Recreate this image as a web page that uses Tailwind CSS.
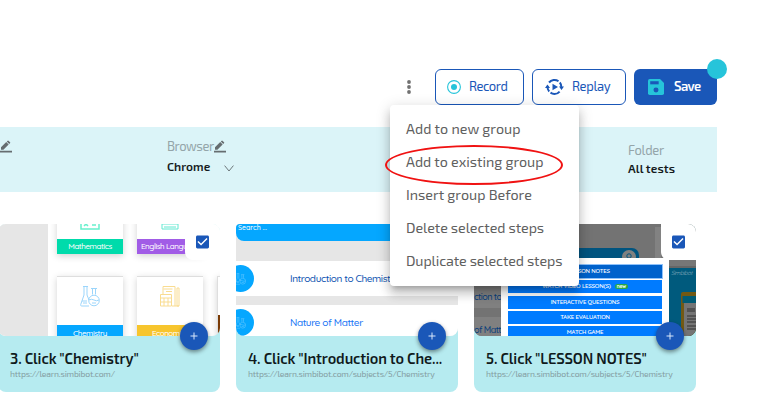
<!DOCTYPE html>
<html lang="en">
<head>
<meta charset="utf-8">
<title>Test steps</title>
<script src="https://cdn.jsdelivr.net/npm/@tailwindcss/browser@4"></script>
</head>
<body class="bg-white">
<svg class="hidden">
  <symbol id="pencil" viewBox="0 0 24 24"><path fill="#666d70" d="M0 20.500h24V24H0zM2 13.700V18.500h4.800L17.300 8 12.500 3.200zM20.200 5.100a1 1 0 0 0 0-1.400L16.800.3a1 1 0 0 0-1.400 0L13.600 2.100 18.400 6.900z"/></symbol>
  <symbol id="check" viewBox="3 3 18 18"><path fill="#1a57b8" d="M19 3H5c-1.110 0-2 .9-2 2v14c0 1.100.89 2 2 2h14c1.110 0 2-.9 2-2V5c0-1.100-.89-2-2-2zm-9 14l-5-5 1.410-1.410L10 14.170l7.590-7.590L19 8l-9 9z"/></symbol>
  <symbol id="flasks" viewBox="0 0 20 21"><g fill="none" stroke="currentColor" stroke-width="1"><path d="M3 .5h5M4 1v8L.7 18.500q-.3 1.500 1 1.500H9M7 1v8l2 5M2 15h5M11 2.500h6M12.500 3v5.500M15.500 3v5.500"/><circle cx="14" cy="14.500" r="5.300"/><path d="M9 14q2.500-1.500 5 0t5 0M3 17h4M12 17h4"/></g></symbol>
  <symbol id="ledger" viewBox="0 0 20 21"><g fill="none" stroke="currentColor" stroke-width="1"><path d="M3 8V.5h12V20M3.500 3h9M6 5.500h6M17 2v18h2V2zM.5 8.500h11V20H.5zM.5 12h11M4 12v8M8 12v8M.5 16h11M12 20h7"/></g></symbol>
</svg>

<div class="relative w-[761px] h-[401px] overflow-hidden font-['Exo_2','Exo','Open_Sans',sans-serif]">
  <header class="flex items-end justify-end h-[105px] pr-11 gap-2 text-[13px] text-[#1a57b8]">
    <svg class="w-1 h-[14px] mr-4 mb-[11px]" viewBox="0 0 4 14" fill="#717171"><circle cx="2" cy="2" r="1.900"/><circle cx="2" cy="7" r="1.900"/><circle cx="2" cy="12" r="1.900"/></svg>
    <button class="flex items-center w-[89px] h-9 rounded-md border border-[#1a57b8] pl-[11px]">
      <svg class="w-[14px] h-[14px] shrink-0" viewBox="0 0 14 14"><circle cx="7" cy="7" r="6.400" fill="none" stroke="#26c4da" stroke-width="1.100"/><circle cx="7" cy="7" r="3" fill="#26c4da"/></svg>
      <span class="ml-2 -mt-[3px] tracking-[-0.45px] leading-5">Record</span>
    </button>
    <button class="flex items-center w-[94px] h-9 rounded-md border border-[#1a57b8] pl-3">
      <svg class="w-[19px] h-[18px] shrink-0" viewBox="0 0 19 18"><g fill="none" stroke="#1a57b8" stroke-width="2"><path d="M4 4.500A7 7 0 0 1 13.500 3.200M14.800 4.500a7 7 0 0 1 1.600 5M14.600 13.600A7 7 0 0 1 5.500 14.700M4.200 13.500A7 7 0 0 1 2.600 8"/></g><path fill="#1a57b8" d="M7.500 5.800l5.500 3.200-5.500 3.200zM0 10l2.500-3.500L5 10zM14 8.500h5l-2.500 3.500z"/></svg>
      <span class="ml-2 -mt-[3px] tracking-[-0.35px] leading-5">Replay</span>
    </button>
    <div class="relative">
      <button class="flex items-center w-[83px] h-9 rounded-md bg-[#1a57b8] pl-[14px] text-white font-semibold">
        <svg class="w-4 h-4 shrink-0" viewBox="0 0 18 18"><path fill="#26c4da" d="M2 0h11.500L18 4.500V16a2 2 0 0 1-2 2H2a2 2 0 0 1-2-2V2a2 2 0 0 1 2-2z"/><path fill="#1a57b8" d="M2.500 2.500h9.500v3.500H2.500z"/><circle cx="9" cy="12.500" r="2.800" fill="#1a57b8"/></svg>
        <span class="ml-[10px] -mt-[3px] tracking-[-0.6px] leading-5">Save</span>
      </button>
      <span class="absolute -top-[10px] -right-[10px] w-5 h-5 rounded-full bg-[#26c4da]"></span>
    </div>
  </header>

  <section class="mt-[22px] w-[717px] h-[65px] bg-[#dbf4f8] flex text-[13px] leading-4">
    <svg class="w-3 h-[13px] mt-[13px] shrink-0"><use href="#pencil"/></svg>
    <div class="ml-[155px] w-[461px] pt-[11px]">
      <div class="flex"><span class="text-[#94a5a9] tracking-[-0.45px] w-[47px]">Browser</span><svg class="w-3 h-[13px] mt-[2px]"><use href="#pencil"/></svg></div>
      <div class="flex items-center mt-1 text-[#151b1d]"><span class="font-semibold text-[12px] tracking-[0.05px] w-[57px]">Chrome</span><svg class="w-[10px] h-[7px] mt-[5px]" viewBox="0 0 10 7" fill="none" stroke="#6c777a"><path d="M.6.6L5 6 9.400.6"/></svg></div>
    </div>
    <div class="pt-[15px]">
      <div class="text-[#94a5a9] tracking-[-0.3px]">Folder</div>
      <div class="mt-[2px] text-[12px] font-semibold tracking-[0.12px] text-[#151b1d]">All tests</div>
    </div>
  </section>

  <main class="flex gap-4 mt-8 -ml-[2px]">
    <article class="relative w-[222px] h-[168px] shrink-0 rounded-[8px] bg-[#b6ebf0]">
      <div class="h-28 rounded-lg overflow-hidden bg-white flex font-['Quicksand','Lato',sans-serif]">
        <div class="w-[50px] shrink-0 bg-[#e6e6e6]"></div>
        <div class="ml-[9px] -mt-[34px] shrink-0 grid grid-cols-[66px_66px_66px] auto-rows-[64px] gap-x-[14px] gap-y-[22px] text-[8px] tracking-[-0.45px] leading-[15px] font-medium text-white text-center">
          <div class="flex flex-col justify-end border-t border-[#e6e6e6] shadow-[0_2px_7px_rgba(0,0,0,.18)]"><svg class="w-5 h-5 mx-auto mb-[9px]" viewBox="0 0 20 20" fill="none" stroke="#67f0cd" stroke-width="1.500"><path d="M1 1h18v18H1zM4 12l4 4M8 12l-4 4M12 15h4"/></svg><div class="bg-[#00dbab] h-[15px]">Mathematics</div></div>
          <div class="flex flex-col justify-end border-t border-[#e6e6e6] shadow-[0_2px_7px_rgba(0,0,0,.18)]"><svg class="w-[18px] h-5 mx-auto mb-[9px]" viewBox="0 0 18 20" fill="none" stroke="#60e8d1"><path d="M1 1h16v13H1zM1 14v5h16v-5M3 17h12"/></svg><div class="bg-[#a15ce6] h-[15px] whitespace-nowrap pl-1 text-left">English Langu</div></div>
          <div></div>
          <div class="flex flex-col justify-end border-t border-[#dedede] shadow-[0_2px_7px_rgba(0,0,0,.18)]"><svg class="w-5 h-[21px] mx-auto mb-[18px] text-[#9bd5fb]"><use href="#flasks"/></svg><div class="bg-[#05a7ff] h-[15px] pt-px">Chemistry</div></div>
          <div class="flex flex-col justify-end border-t border-[#dedede] shadow-[0_2px_7px_rgba(0,0,0,.18)]"><svg class="w-5 h-[21px] mx-auto mb-[18px] text-[#f9dc91]"><use href="#ledger"/></svg><div class="bg-[#f7c52d] h-[15px] pt-px">Economics</div></div>
          <div class="border-l border-t border-[#dedede] pt-[38px] shadow-[0_2px_7px_rgba(0,0,0,.18)]"><div class="h-[26px] bg-[#7a3b06]"></div></div>
        </div>
      </div>
      <div class="pl-3 pt-3 text-[14.7px] leading-5 font-semibold tracking-[-0.1px] text-[#101a1c]">3. Click "Chemistry"</div>
      <div class="pl-3 text-[8.6px] leading-3 tracking-[-0.2px] text-[#849da2]">https://learn.simbibot.com/</div>
      <div class="absolute top-0 right-0 w-[35px] h-9 bg-white rounded-bl-lg rounded-tr-lg flex items-center justify-center"><svg class="w-[13px] h-[14px]"><use href="#check"/></svg></div>
      <div class="absolute top-[98px] right-3 w-7 h-7 rounded-full bg-[#1a57b8] shadow-[0_2px_4px_rgba(0,0,0,.45)] flex items-center justify-center"><svg class="w-2 h-2" viewBox="0 0 8 8" stroke="#d9e8fb"><path d="M4 .5v7M.5 4h7"/></svg></div>
    </article>

    <article class="relative w-[222px] h-[168px] shrink-0 rounded-[8px] bg-[#b6ebf0]">
      <div class="h-28 rounded-b-lg rounded-tl-sm overflow-hidden bg-[#e6e6e6] font-['Quicksand','Lato',sans-serif] text-[10px] font-medium">
        <div class="h-[17px] bg-[#05a7ff] rounded-bl-lg text-white text-[7px] leading-[8px] pl-[2px]">Search ...</div>
        <div class="mt-5 h-[35px] bg-white flex items-center"><div class="-ml-[9px] w-[27px] h-[27px] shrink-0 rounded-full bg-[#05a7ff] flex items-center justify-center"><svg class="w-[11px] h-3 text-[#67c9ff]"><use href="#flasks"/></svg></div><span class="ml-9 text-[#0b52b0] whitespace-nowrap tracking-[-0.42px]">Introduction to Chemistry</span></div>
        <div class="mt-[9px] h-[35px] bg-white flex items-center"><div class="-ml-[9px] w-[27px] h-[27px] shrink-0 rounded-full bg-[#05a7ff] flex items-center justify-center"><svg class="w-[11px] h-3 text-[#67c9ff]"><use href="#flasks"/></svg></div><span class="ml-9 text-[#1472f5] whitespace-nowrap tracking-[-0.4px]">Nature of Matter</span></div>
      </div>
      <div class="pl-3 pt-3 text-[14.7px] leading-5 font-semibold tracking-[-0.1px] text-[#101a1c] whitespace-nowrap">4. Click "Introduction to Che...</div>
      <div class="pl-3 text-[8.6px] leading-3 tracking-[-0.2px] text-[#849da2] whitespace-nowrap">https://learn.simbibot.com/subjects/5/Chemistry</div>
      <div class="absolute top-[98px] right-3 w-7 h-7 rounded-full bg-[#1a57b8] shadow-[0_2px_4px_rgba(0,0,0,.45)] flex items-center justify-center"><svg class="w-2 h-2" viewBox="0 0 8 8" stroke="#d9e8fb"><path d="M4 .5v7M.5 4h7"/></svg></div>
    </article>

    <article class="relative w-[222px] h-[168px] shrink-0 rounded-[8px] bg-[#b6ebf0]">
      <div class="h-28 rounded-lg overflow-hidden bg-[#737373] font-['Quicksand','Lato',sans-serif]">
        <div class="h-[34px] flex">
          <div class="mt-6 w-[165px] h-[10px] rounded-tr-[7px] bg-[#00547f] flex justify-end pr-[3px]"><svg class="w-[14px] h-[14px] mt-[2px]" viewBox="0 0 14 14"><circle cx="7" cy="7" r="7" fill="#808080"/><circle cx="7" cy="6" r="2.200" fill="none" stroke="#00547f"/></svg></div>
          <div class="ml-4 mt-[3px] w-[6px] h-[31px] bg-[#828282]"></div>
        </div>
        <div class="relative flex h-[78px]">
          <div class="w-[27px] shrink-0 text-[9px] leading-[14px] font-medium tracking-[-0.55px] text-[#063c7b] whitespace-nowrap bg-[#808080]">
            <div class="h-[50px] pt-8">ction to</div>
            <div class="h-[9px] bg-[#737373]"></div>
            <div class="pt-[6px]">of Matte</div>
          </div>
          <div class="w-[168px] shrink-0 bg-white pt-[7px] px-[7px] flex flex-col gap-[2.300px] text-[6px] leading-[13px] font-semibold text-white text-center tracking-[-0.2px]">
            <div class="h-[13px] shrink-0 bg-[#0062cc] ring-1 ring-[#8fc2fa] pl-2">LESSON NOTES</div>
            <div class="h-[13px] shrink-0 bg-[#007bff] flex items-center justify-center gap-1">WATCH VIDEO LESSON(S)<span class="bg-[#28a745] rounded-full px-[2px] text-[5px] leading-[5px] font-bold">new</span></div>
            <div class="h-[13px] shrink-0 bg-[#007bff]">INTERACTIVE QUESTIONS</div>
            <div class="h-[13px] shrink-0 bg-[#007bff]">TAKE EVALUATION</div>
            <div class="h-[13px] shrink-0 bg-[#007bff]">MATCH GAME</div>
          </div>
          <div class="w-[27px] shrink-0 bg-[#005a7d]">
            <div class="h-[10px] bg-[#777] border-b-2 border-[#676767]"></div>
            <div class="text-[6px] leading-[10px] text-[#80a8ba] tracking-[-0.4px] pl-[2px] italic">Simbibot</div>
            <svg class="ml-3 mt-[14px] w-[15px] h-[44px]" viewBox="0 0 15 44"><rect width="26" height="50" rx="2" fill="#725914"/><path fill="#005b75" d="M1.500 4H15v7H1.500z"/><path fill="#757575" d="M3 11h12v33H3z"/><path stroke="#333" stroke-width="1" d="M6 17h8M6 19h8M6 24h9M6 27h9M6 30h9M6 34h9M6 37h9"/></svg>
          </div>
        </div>
      </div>
      <div class="pl-3 pt-3 text-[14.7px] leading-5 font-semibold tracking-[-0.1px] text-[#101a1c]">5. Click "LESSON NOTES"</div>
      <div class="pl-3 text-[8.6px] leading-3 tracking-[-0.2px] text-[#849da2] whitespace-nowrap">https://learn.simbibot.com/subjects/5/Chemistry</div>
      <div class="absolute top-0 right-0 w-[35px] h-9 bg-white rounded-bl-lg rounded-tr-lg flex items-center justify-center"><svg class="w-[13px] h-[14px]"><use href="#check"/></svg></div>
      <div class="absolute top-[98px] right-3 w-7 h-7 rounded-full bg-[#1a57b8] shadow-[0_2px_4px_rgba(0,0,0,.45)] flex items-center justify-center"><svg class="w-2 h-2" viewBox="0 0 8 8" stroke="#d9e8fb"><path d="M4 .5v7M.5 4h7"/></svg></div>
    </article>
  </main>

  <div class="absolute left-[390px] top-[105px] w-[189px] h-[181px] rounded bg-white pt-[7px] pl-4 text-[14.3px] leading-[33px] text-[#606060] whitespace-nowrap shadow-[0_5px_5px_-3px_rgba(0,0,0,.2),0_8px_10px_1px_rgba(0,0,0,.14),0_3px_14px_2px_rgba(0,0,0,.12)]">
    <div class="tracking-[0.06px]">Add to new group</div>
    <div>Add to existing group</div>
    <div>Insert group Before</div>
    <div class="tracking-[-0.08px]">Delete selected steps</div>
    <div class="tracking-[-0.12px]">Duplicate selected steps</div>
  </div>
  <div class="absolute left-[385px] top-[145px] w-[178px] h-10 rounded-[50%] border-2 border-[#f01212]"></div>
</div>
</body>
</html>
